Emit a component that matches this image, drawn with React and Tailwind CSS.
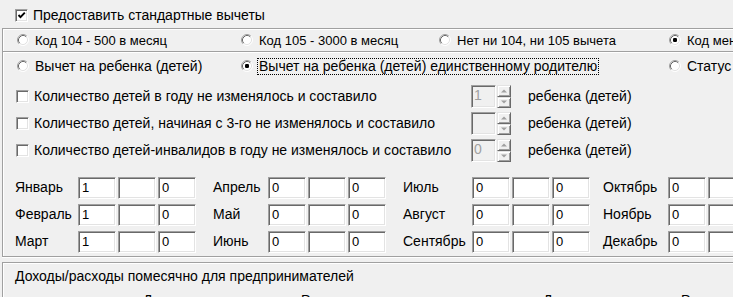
import React from "react";

const sunken =
  "border border-t-[#a0a0a0] border-l-[#a0a0a0] border-r-white border-b-white shadow-[inset_1px_1px_0_#696969,inset_-1px_-1px_0_#e3e3e3]";

function Radio({ checked }) {
  return (
    <svg width="12" height="12" viewBox="0 0 12 12" className="shrink-0">
      <circle cx="6" cy="6" r="5" fill="#fff" />
      <path d="M2.11 9.89 A5.5 5.5 0 0 1 9.89 2.11" fill="none" stroke="#a0a0a0" strokeWidth="1" />
      <path d="M2.82 9.18 A4.5 4.5 0 0 1 9.18 2.82" fill="none" stroke="#696969" strokeWidth="1" />
      <path d="M9.89 2.11 A5.5 5.5 0 0 1 2.11 9.89" fill="none" stroke="#ffffff" strokeWidth="1" />
      <path d="M9.18 2.82 A4.5 4.5 0 0 1 2.82 9.18" fill="none" stroke="#e3e3e3" strokeWidth="1" />
      {checked && <rect x="4" y="4" width="4" height="4" rx="1.2" fill="#000" />}
    </svg>
  );
}

function Check({ checked }) {
  return (
    <div className={`w-[13px] h-[13px] shrink-0 bg-white ${sunken} flex items-center justify-center`}>
      {checked && (
        <svg width="9" height="9" viewBox="0 0 9 9">
          <polyline points="1.5,4 3.5,6.2 7.8,1.6" fill="none" stroke="#000" strokeWidth="1.9" />
        </svg>
      )}
    </div>
  );
}

function RadioItem({ label, checked, focus, small }) {
  const size = small ? "text-[13px]" : "text-[14px]";
  return (
    <div className="flex items-center gap-[4px] whitespace-nowrap">
      <Radio checked={checked} />
      <span
        className={
          focus
            ? `${size} border border-dotted border-black px-[1px] leading-[15px]`
            : `${size} leading-[15px] pl-[2px]`
        }
      >
        {label}
      </span>
    </div>
  );
}

function Spin({ value }) {
  return (
    <div className="flex items-center">
      <div className={`w-[25px] h-[23px] bg-[#f0f0f0] ${sunken} text-[#a0a0a0] pl-[2px] leading-[19px]`}>
        {value}
      </div>
      <div className="w-[14px] h-[23px] flex flex-col ml-[1px]">
        {[0, 1].map((i) => (
          <div
            key={i}
            className="flex-1 bg-[#f0f0f0] border border-t-[#e3e3e3] border-l-[#e3e3e3] border-r-[#696969] border-b-[#696969] shadow-[inset_1px_1px_0_#fff,inset_-1px_-1px_0_#a0a0a0] flex items-center justify-center"
          >
            <svg width="6" height="4" viewBox="0 0 6 4">
              {i === 0 ? (
                <polygon points="0,3.5 3,0.5 6,3.5" fill="#a0a0a0" />
              ) : (
                <polygon points="0,0.5 3,3.5 6,0.5" fill="#a0a0a0" />
              )}
            </svg>
          </div>
        ))}
      </div>
    </div>
  );
}

function Box({ value }) {
  return (
    <div className={`w-[38px] h-[22px] shrink-0 bg-white ${sunken} pl-[3px] leading-[20px] text-[13px]`}>{value}</div>
  );
}

const months = [
  [
    ["Январь", "1", "", "0"],
    ["Февраль", "1", "", "0"],
    ["Март", "1", "", "0"],
  ],
  [
    ["Апрель", "0", "", "0"],
    ["Май", "0", "", "0"],
    ["Июнь", "0", "", "0"],
  ],
  [
    ["Июль", "0", "", "0"],
    ["Август", "0", "", "0"],
    ["Сентябрь", "0", "", "0"],
  ],
  [
    ["Октябрь", "0", "", "0"],
    ["Ноябрь", "0", "", "0"],
    ["Декабрь", "0", "", "0"],
  ],
];
const colW = ["w-[198px]", "w-[190px]", "w-[200px]", "w-[200px]"];
const labelW = ["w-[63px]", "w-[55px]", "w-[69px]", "w-[65px]"];

export default function App() {
  return (
    <div
      className="w-[733px] h-[297px] overflow-hidden bg-[#f0f0f0] text-black text-[14px]"
      style={{ fontFamily: '"Liberation Sans", Arial, sans-serif' }}
    >
      <div className="h-[28px] flex items-center pt-[3px] pl-[15px] gap-[5px]">
        <Check checked />
        <span className="whitespace-nowrap">Предоставить стандартные вычеты</span>
      </div>

      <div className="ml-[2px] w-[900px] border-t border-l border-b border-[#a0a0a0] shadow-[inset_1px_1px_0_#fff]">
        {/* group 1 */}
        <div className="h-[23px] border-b border-[#a0a0a0] flex items-center pl-[14px]">
          <div className="w-[224px]"><RadioItem small label="Код 104 - 500 в месяц" /></div>
          <div className="w-[198px]"><RadioItem small label="Код 105 - 3000 в месяц" /></div>
          <div className="w-[230px]"><RadioItem small label="Нет ни 104, ни 105 вычета" /></div>
          <div><RadioItem small label="Код меньше 1 года" checked /></div>
        </div>
        <div className="h-px bg-white" />
        {/* group 2 */}
        <div className="h-[26px] flex items-center pl-[14px]">
          <div className="w-[224px]"><RadioItem label="Вычет на ребенка (детей)" /></div>
          <div className="w-[428px]"><RadioItem label="Вычет на ребенка (детей) единственному родителю" checked focus /></div>
          <div><RadioItem label="Статус налогоплательщика" /></div>
        </div>

        <div className="mt-[4px] flex flex-col pl-[13px]">
          {[
            ["Количество детей в году не изменялось и составило", "1"],
            ["Количество детей, начиная с 3-го не изменялось и составило", ""],
            ["Количество детей-инвалидов в году не изменялось и составило", "0"],
          ].map(([t, v], i) => (
            <div key={i} className="h-[27px] flex items-center">
              <div className="w-[455px] flex items-center gap-[5px]">
                <Check />
                <span className="whitespace-nowrap">{t}</span>
              </div>
              <div className="w-[57px]">
                <Spin value={v} />
              </div>
              <span className="whitespace-nowrap">ребенка (детей)</span>
            </div>
          ))}
        </div>

        <div className="mt-[10px] flex pl-[12px] pb-[1px]">
          {months.map((col, ci) => (
            <div key={ci} className={`${colW[ci]} shrink-0 flex flex-col`}>
              {col.map(([name, a, b, c]) => (
                <div key={name} className="h-[27px] flex items-center">
                  <span className={`${labelW[ci]} shrink-0 whitespace-nowrap`}>{name}</span>
                  <div className="flex gap-[2px]">
                    <Box value={a} />
                    <Box value={b} />
                    <Box value={c} />
                  </div>
                </div>
              ))}
            </div>
          ))}
        </div>
      </div>
      <div className="ml-[2px] w-[900px] h-px bg-white" />

      <div className="mt-[4px] ml-[2px] w-[900px] h-[60px] border-t border-l border-[#a0a0a0] shadow-[inset_1px_1px_0_#fff]">
        <div className="pl-[12px] pt-[6px] leading-[15px] whitespace-nowrap">
          Доходы/расходы помесячно для предпринимателей
        </div>
        <div className="mt-[9px] flex leading-[15px] whitespace-nowrap">
          <span className="ml-[140px] w-[158px]">Доходы</span>
          <span className="w-[242px]">Расходы</span>
          <span className="w-[138px]">Доходы</span>
          <span>Расходы</span>
        </div>
      </div>
    </div>
  );
}
